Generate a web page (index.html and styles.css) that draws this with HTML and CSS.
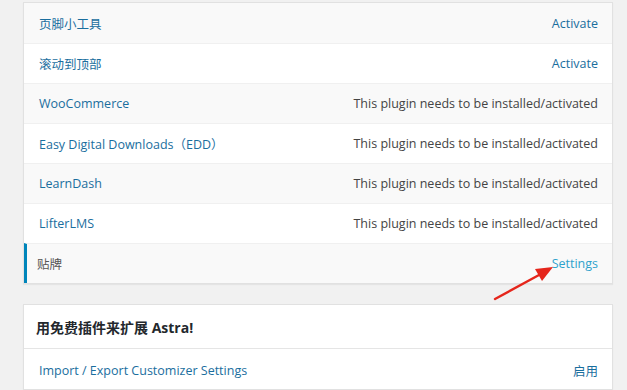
FILE: index.html
```html
<!DOCTYPE html>
<html lang="zh-CN">
  <head>
    <meta charset="UTF-8" />
    <meta name="viewport" content="width=device-width, initial-scale=1.0" />
    <title>Astra 插件</title>
    <link rel="stylesheet" href="styles.css">
  </head>
  <body>
    <main class="wrap">
      <!-- [1] Modules list -->
      <section class="card">
        <ul class="list">
          <li class="row"><a href="#">页脚小工具</a><a href="#">Activate</a></li>
          <li class="row"><a href="#">滚动到顶部</a><a href="#">Activate</a></li>
          <li class="row"><a href="#">WooCommerce</a><span class="note">This plugin needs to be installed/activated</span></li>
          <li class="row"><a href="#">Easy Digital Downloads（EDD）</a><span class="note">This plugin needs to be installed/activated</span></li>
          <li class="row"><a href="#">LearnDash</a><span class="note">This plugin needs to be installed/activated</span></li>
          <li class="row"><a href="#">LifterLMS</a><span class="note">This plugin needs to be installed/activated</span></li>
          <li class="row active"><span class="label">贴牌</span><a href="#" class="settings">Settings</a></li>
        </ul>
      </section>

      <!-- [2] Free plugins -->
      <section class="card">
        <h2 class="card-title">用免费插件来扩展 Astra!</h2>
        <ul class="list">
          <li class="row plain"><a href="#">Import / Export Customizer Settings</a><a href="#">启用</a></li>
        </ul>
      </section>

      <svg class="arrow" width="80" height="50" viewBox="0 0 80 50" aria-hidden="true">
        <line x1="8" y1="44" x2="52" y2="20" stroke="#e5261c" stroke-width="2.4" stroke-linecap="round" />
        <polygon points="66,12 48,14 55,26" fill="#e5261c" />
      </svg>
    </main>
  </body>
</html>
```

FILE: styles.css
```css
* {
  margin: 0;
  padding: 0;
  box-sizing: border-box;
}
body {
  background-color: #f1f1f1;
  font-family: "Open Sans", "Noto Sans CJK SC", sans-serif;
  font-size: 12.5px;
  color: #555;
  overflow: hidden;
}
a {
  color: #1a6e9e;
  text-decoration: none;
}

.wrap {
  position: relative;
  display: flex;
  flex-direction: column;
  gap: 20px;
  width: 590px;
  margin: 2px 0 0 23px;
}

/* cards */
.card {
  background-color: #fff;
  border: 1px solid #e1e1e1;
  box-shadow: 0 1px 1px rgba(0, 0, 0, 0.05);
}
.card-title {
  height: 44px;
  display: flex;
  align-items: center;
  padding: 0 12px;
  font-size: 14px;
  font-weight: 700;
  color: #23282d;
  border-bottom: 1px solid #e5e5e5;
}

/* rows */
.list {
  list-style: none;
}
.row {
  height: 40px;
  display: flex;
  align-items: center;
  justify-content: space-between;
  padding: 0 14px 0 15px;
  border-top: 1px solid #f0f0f0;
}
.row:first-child {
  border-top: 0;
}
.row:nth-child(odd) {
  background-color: #f9f9f9;
}
.row.plain {
  background-color: #fff;
  padding-top: 3px;
}
.row .note {
  color: #444;
}
.row.active {
  border-left: 3px solid #0085ba;
  padding-left: 10px;
}
.row .label {
  color: #555;
}
.row .settings {
  color: #2ea2cc;
}

/* annotation */
.arrow {
  position: absolute;
  top: 253px;
  left: 464px;
}
```
